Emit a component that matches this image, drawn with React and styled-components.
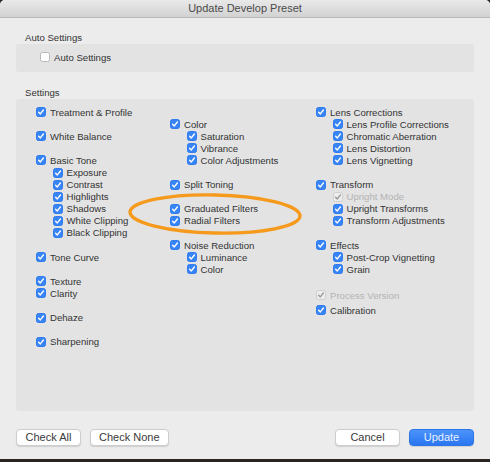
import React from "react";
import styled, { createGlobalStyle } from "styled-components";

const Global = createGlobalStyle`
  html, body {
    margin: 0;
    padding: 0;
    background: #2b2522;
  }
  body {
    font-family: "Liberation Sans", Arial, sans-serif;
  }
`;

const ROW = 12.1;

const columns = [
  [
    { label: "Treatment & Profile" },
    { label: "White Balance", skip: 1 },
    { label: "Basic Tone", skip: 1 },
    { label: "Exposure", level: 1 },
    { label: "Contrast", level: 1 },
    { label: "Highlights", level: 1 },
    { label: "Shadows", level: 1 },
    { label: "White Clipping", level: 1 },
    { label: "Black Clipping", level: 1 },
    { label: "Tone Curve", skip: 1 },
    { label: "Texture", skip: 1 },
    { label: "Clarity" },
    { label: "Dehaze", skip: 1 },
    { label: "Sharpening", skip: 1 },
  ],
  [
    { label: "Color", skip: 1 },
    { label: "Saturation", level: 1 },
    { label: "Vibrance", level: 1 },
    { label: "Color Adjustments", level: 1 },
    { label: "Split Toning", skip: 1 },
    { label: "Graduated Filters", skip: 1 },
    { label: "Radial Filters" },
    { label: "Noise Reduction", skip: 1 },
    { label: "Luminance", level: 1 },
    { label: "Color", level: 1 },
  ],
  [
    { label: "Lens Corrections" },
    { label: "Lens Profile Corrections", level: 1 },
    { label: "Chromatic Aberration", level: 1 },
    { label: "Lens Distortion", level: 1 },
    { label: "Lens Vignetting", level: 1 },
    { label: "Transform", skip: 1 },
    { label: "Upright Mode", level: 1, disabled: true },
    { label: "Upright Transforms", level: 1 },
    { label: "Transform Adjustments", level: 1 },
    { label: "Effects", skip: 1 },
    { label: "Post-Crop Vignetting", level: 1 },
    { label: "Grain", level: 1 },
    { label: "Process Version", skip: 1, extra: 2, disabled: true },
    { label: "Calibration", extra: 2.5 },
  ],
];

function Check({ checked = true, disabled }) {
  return (
    <Box $checked={checked} $disabled={disabled}>
      {checked && (
        <svg width="8" height="8" viewBox="0 0 8 8">
          <path
            d="M1.6 4.2 L3.3 5.9 L6.4 2"
            fill="none"
            stroke={disabled ? "#9a9a9a" : "#fff"}
            strokeWidth="1.4"
            strokeLinecap="round"
            strokeLinejoin="round"
          />
        </svg>
      )}
    </Box>
  );
}

export default function App() {
  return (
    <>
      <Global />
      <Window>
        <TitleBar>Update Develop Preset</TitleBar>
        <Body>
          <SectionLabel>Auto Settings</SectionLabel>
          <AutoBox>
            <Item>
              <Check checked={false} />
              <Label>Auto Settings</Label>
            </Item>
          </AutoBox>
          <SectionLabel $top={15}>Settings</SectionLabel>
          <SettingsBox>
            {columns.map((col, i) => (
              <Column key={i}>
                {col.map((it, j) => (
                  <Item
                    key={j}
                    $level={it.level || 0}
                    $skip={it.skip || 0}
                    $extra={it.extra || 0}
                  >
                    <Check disabled={it.disabled} />
                    <Label $disabled={it.disabled}>{it.label}</Label>
                  </Item>
                ))}
              </Column>
            ))}
          </SettingsBox>
          <Footer>
            <Group>
              <Button>Check All</Button>
              <Button>Check None</Button>
            </Group>
            <Group>
              <Button>Cancel</Button>
              <Button $primary>Update</Button>
            </Group>
          </Footer>
        </Body>
        <Highlight width="180" height="48" viewBox="0 0 180 48">
          <ellipse
            cx="90"
            cy="24"
            rx="85"
            ry="19"
            fill="none"
            stroke="#f59a1c"
            strokeWidth="3.4"
            transform="rotate(1.3 90 24)"
          />
        </Highlight>
      </Window>
    </>
  );
}

const Window = styled.div`
  position: relative;
  width: 490px;
  height: 459px;
  background: #ececec;
  border-radius: 5px 5px 0 0;
  overflow: hidden;
`;

const TitleBar = styled.div`
  height: 17px;
  border-bottom: 1px solid #b9b9b9;
  background: linear-gradient(#e9e9e9, #d2d2d2);
  color: #4b4b4b;
  font-size: 11px;
  line-height: 17px;
  text-align: center;
`;

const Body = styled.div`
  padding: 0 16px;
  display: flex;
  flex-direction: column;
`;

const SectionLabel = styled.div`
  margin-top: ${(p) => p.$top || 14}px;
  padding-left: 9px;
  height: 12px;
  font-size: 9.6px;
  line-height: 12px;
  color: #333;
`;

const AutoBox = styled.div`
  height: 28px;
  width: 458px;
  box-sizing: border-box;
  background: #e3e3e3;
  border-radius: 3px;
  padding: 7px 0 0 24px;
`;

const SettingsBox = styled.div`
  height: 312px;
  width: 458px;
  box-sizing: border-box;
  background: #e3e3e3;
  border-radius: 3px;
  padding: 7px 0 0 20px;
  display: grid;
  grid-template-columns: 134px 146px 1fr;
  align-items: start;
`;

const Column = styled.div`
  display: flex;
  flex-direction: column;
`;

const Item = styled.div`
  display: flex;
  align-items: center;
  height: ${ROW}px;
  gap: 4px;
  padding-left: ${(p) => (p.$level || 0) * 16.5}px;
  margin-top: ${(p) => (p.$skip || 0) * ROW + (p.$extra || 0)}px;
`;

const Box = styled.span`
  flex: none;
  width: 10px;
  height: 10px;
  box-sizing: border-box;
  border-radius: 2.5px;
  display: flex;
  align-items: center;
  justify-content: center;
  background: ${(p) =>
    p.$disabled ? "#ededed" : p.$checked ? "#3784f6" : "#ffffff"};
  border: 1px solid
    ${(p) => (p.$disabled ? "#cfcfcf" : p.$checked ? "#2f7bef" : "#b7b7b7")};
`;

const Label = styled.span`
  font-size: 9.6px;
  color: ${(p) => (p.$disabled ? "#b3b3b3" : "#333")};
  white-space: nowrap;
`;

const Footer = styled.div`
  margin-top: 18px;
  width: 458px;
  display: flex;
  justify-content: space-between;
`;

const Group = styled.div`
  display: flex;
  gap: 9px;
`;

const Button = styled.button`
  height: 17px;
  min-width: 65px;
  padding: 0 8px;
  border-radius: 4px;
  font-family: "Liberation Sans", Arial, sans-serif;
  font-size: 11px;
  line-height: 15px;
  color: ${(p) => (p.$primary ? "#e9f1ff" : "#3a3a3a")};
  background: ${(p) =>
    p.$primary ? "linear-gradient(#4c94fa, #2a76f1)" : "#ffffff"};
  border: 1px solid ${(p) => (p.$primary ? "#2c74e8" : "#cdcdcd")};
  box-shadow: 0 1px 1px rgba(0, 0, 0, 0.12);
`;

const Highlight = styled.svg`
  position: absolute;
  left: 125px;
  top: 190px;
  pointer-events: none;
`;
